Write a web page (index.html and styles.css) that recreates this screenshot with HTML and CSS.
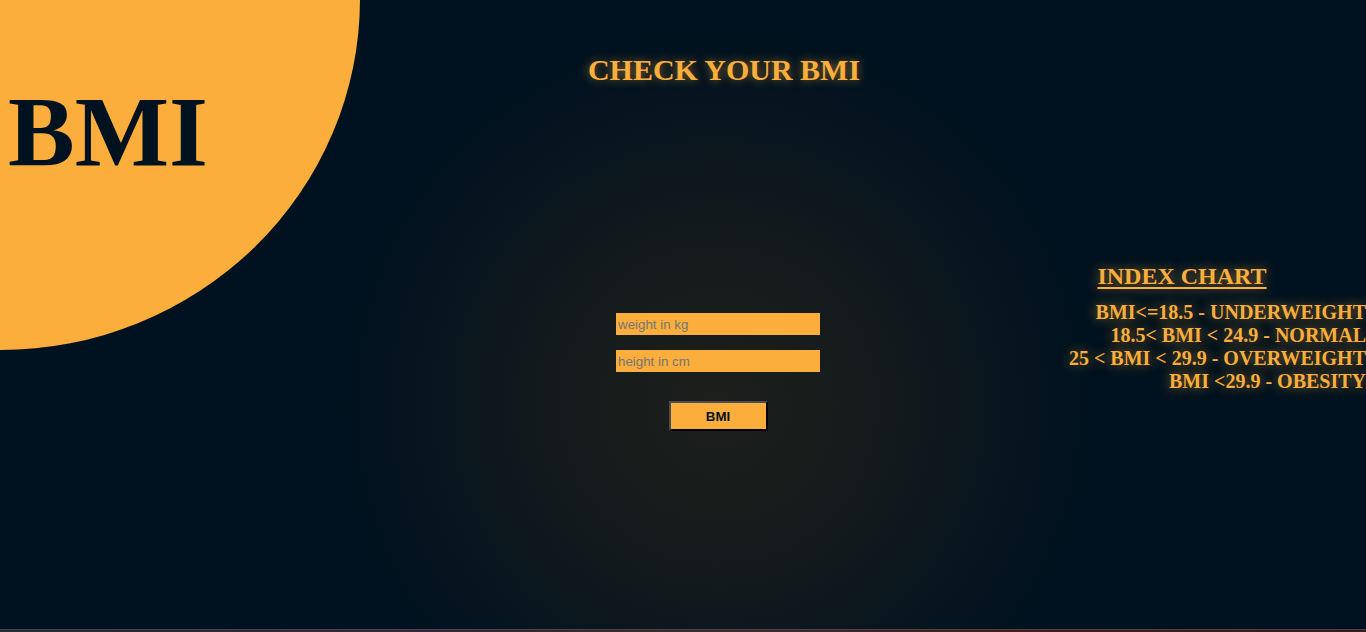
FILE: index.html
```html
<!DOCTYPE html>
<html lang="en">
<head>
<meta charset="utf-8">
<title>BMI</title>
<link rel="stylesheet" href="styles.css">
</head>
<body>
<div class="page">
  <div class="circle"></div>
  <div class="logo">BMI</div>
  <div class="side"></div>
  <main class="center">
    <h1 class="title">CHECK YOUR BMI</h1>
    <form class="form">
      <input class="field" type="text" placeholder="weight in kg">
      <input class="field" type="text" placeholder="height in cm">
      <button class="btn" type="button">BMI</button>
    </form>
  </main>
  <aside class="chart">
    <h2 class="chart-title">INDEX CHART</h2>
    <p class="row">BMI&lt;=18.5 - UNDERWEIGHT</p>
    <p class="row">18.5&lt; BMI &lt; 24.9 - NORMAL</p>
    <p class="row">25 &lt; BMI &lt; 29.9 - OVERWEIGHT</p>
    <p class="row">BMI &lt;29.9 - OBESITY</p>
  </aside>
</div>
<div class="strip"></div>
</body>
</html>
```
FILE: styles.css
```css
html, body {
  margin: 0;
  padding: 0;
  background: #00121f;
  overflow: hidden;
}
body {
  font-family: "Liberation Serif", "Times New Roman", serif;
  height: 632px;
}
.page {
  position: relative;
  height: 629px;
  display: grid;
  grid-template-columns: 370px 696px 300px;
  background: radial-gradient(circle at 718px 405px, #1d1f1c 0px, #131a1b 170px, #06141f 310px, #00121f 380px);
  overflow: hidden;
}
.circle {
  position: absolute;
  left: -360px;
  top: -352px;
  width: 720px;
  height: 702px;
  border-radius: 50%;
  background: #fbae3c;
}
.logo {
  position: absolute;
  left: 8px;
  top: 82px;
  font-size: 100px;
  line-height: 100px;
  font-weight: bold;
  color: #00121f;
}
.center {
  display: flex;
  flex-direction: column;
  align-items: center;
}
.title {
  margin: 53px 0 0 12px;
  font-size: 30px;
  line-height: 34px;
  font-weight: bold;
  color: #fbae3c;
  text-shadow: 0 0 10px rgba(251, 174, 60, 0.55);
}
.form {
  margin-top: 226px;
  display: flex;
  flex-direction: column;
  align-items: center;
}
.field {
  box-sizing: border-box;
  width: 204px;
  height: 22px;
  margin: 0 0 15px;
  padding: 0 2px;
  border: 0;
  background: #fbae3c;
  font-family: "Liberation Sans", Arial, sans-serif;
  font-size: 13.33px;
  color: #222;
  outline: none;
}
.field::placeholder {
  color: #757575;
}
.btn {
  box-sizing: border-box;
  margin-top: 14px;
  width: 99px;
  height: 30px;
  background: #fbae3c;
  border: 2px solid;
  border-color: #4a4d52 #000 #000 #4a4d52;
  font-family: "Liberation Sans", Arial, sans-serif;
  font-size: 13.33px;
  font-weight: bold;
  color: #00121f;
  padding: 0;
}
.chart {
  display: flex;
  flex-direction: column;
  color: #fbae3c;
  font-weight: bold;
}
.chart-title {
  margin: 262px 0 11px;
  padding-right: 68px;
  text-align: center;
  font-size: 24px;
  line-height: 28px;
  font-weight: bold;
  text-decoration: underline;
  text-decoration-thickness: 2px;
  text-underline-offset: 3px;
  text-shadow: 0 0 12px rgba(251, 174, 60, 0.6);
}
.row {
  margin: 0;
  text-align: right;
  font-size: 20px;
  line-height: 23px;
  white-space: nowrap;
  text-shadow: 0 0 12px rgba(251, 174, 60, 0.6);
}
.strip {
  height: 2px;
  border-top: 1px solid #3c4752;
  background: linear-gradient(to right, #2c2935 0%, #3a2538 30%, #3b2a28 50%, #4a1c1c 75%, #3d1a1a 100%);
}
```
